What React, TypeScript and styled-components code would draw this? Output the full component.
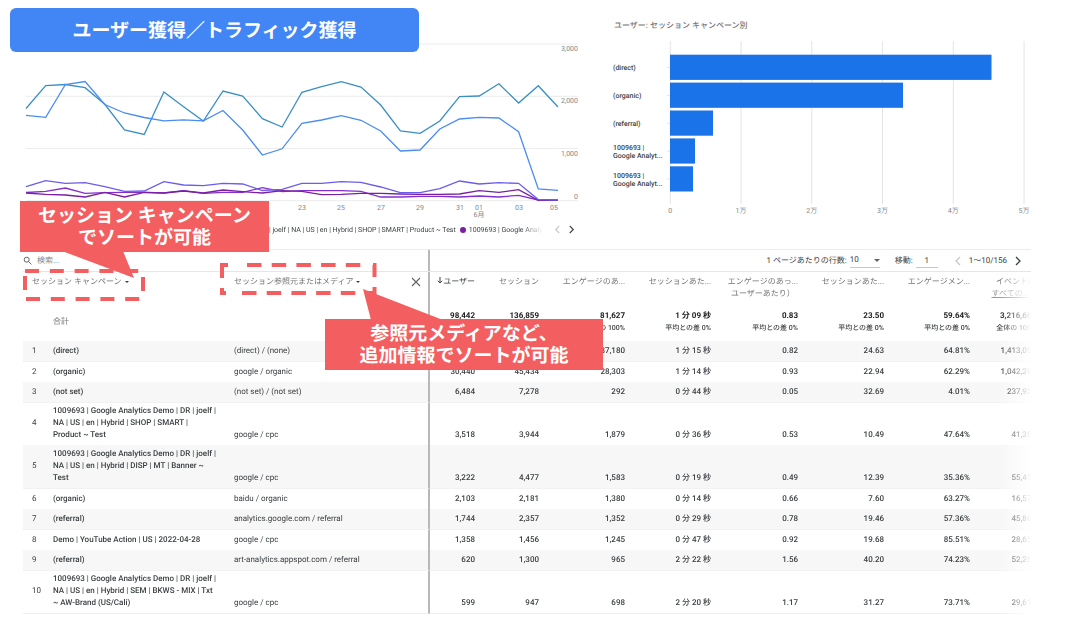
import React from "react";
import styled, { createGlobalStyle } from "styled-components";

const GlobalStyle = createGlobalStyle`
  *, *::before, *::after { box-sizing: border-box; }
  body {
    margin: 0;
    background: #fff;
    color: #3c4043;
    font-family: Roboto, "Noto Sans CJK JP", sans-serif;
    font-size: 8px;
    line-height: 12px;
    text-rendering: geometricPrecision;
  }
  button, input, select { font: inherit; color: inherit; text-rendering: inherit; }
`;

const Page = styled.main`
  position: relative;
`;

const Charts = styled.section`
  display: grid;
  grid-template-columns: 5fr 4fr;
`;

const ChartPanel = styled.div`
  min-width: 0;
`;

const Drawing = styled.svg`
  display: block;
  width: 100%;
  height: auto;
`;

const AxisText = styled.text`
  font-size: 7px;
  fill: #80868b;
`;

const BarLabel = styled.text`
  font-size: 7px;
  font-weight: 500;
  fill: #3c4043;
`;

const ChartTitle = styled.h2`
  margin: 0;
  padding: 20px 0 8px 14px;
  font-size: 8px;
  line-height: 12px;
  font-weight: 500;
  color: #757575;
`;

const Legend = styled.div`
  display: flex;
  align-items: center;
  height: 29px;
  padding: 0 24px 10px 269px;
`;

const LegendItems = styled.div`
  display: flex;
  flex: 1;
  gap: 4px;
  min-width: 0;
  overflow: hidden;
  white-space: nowrap;
  font-size: 7px;
  mask-image: linear-gradient(to right, #000 calc(100% - 22px), transparent);
`;

const LegendItem = styled.span<{ $color?: string }>`
  display: flex;
  align-items: center;
  gap: 3px;
  &::before {
    content: "";
    display: ${(p) => (p.$color ? "block" : "none")};
    width: 6px;
    height: 6px;
    border-radius: 50%;
    background: ${(p) => p.$color};
  }
`;

const IconButton = styled.button<{ $muted?: boolean }>`
  display: flex;
  padding: 0;
  border: 0;
  background: none;
  color: ${(p) => (p.$muted ? "#c4c7ca" : "#3c4043")};
`;

const LegendPager = styled.div`
  display: flex;
  gap: 5px;
  padding-left: 10px;
`;

const TablePanel = styled.section`
  margin: 0 49px 0 23px;
`;

const Toolbar = styled.div`
  display: flex;
  height: 23px;
  border-top: 1px solid #ececec;
  border-bottom: 1px solid #e6e6e6;
`;

const SearchLabel = styled.label`
  display: flex;
  align-items: center;
  gap: 5px;
  width: calc((100% + 5px) * 407 / 1013);
  border-right: 2px solid #b8b8b8;
  color: #5f6368;
`;

const SearchInput = styled.input`
  flex: 1;
  min-width: 0;
  padding: 0;
  border: 0;
  outline: 0;
  background: none;
  &::placeholder { color: #80868b; opacity: 1; }
`;

const Paging = styled.div`
  display: flex;
  flex: 1;
  align-items: center;
  justify-content: flex-end;
  padding-right: 8px;
`;

const PagingLabel = styled.label`
  display: flex;
  align-items: center;
  gap: 3px;
  margin-right: 15px;
`;

const SelectBox = styled.span`
  display: flex;
  align-items: center;
  width: 30px;
  height: 14px;
  border-bottom: 1px solid #c8c8c8;
`;

const RowsSelect = styled.select`
  flex: 1;
  min-width: 0;
  padding: 0;
  border: 0;
  background: none;
  appearance: none;
`;

const PageInput = styled.input`
  width: 22px;
  height: 14px;
  padding: 0;
  border: 0;
  border-bottom: 1px solid #c8c8c8;
  background: none;
  text-align: center;
`;

const Range = styled.span`
  margin: 0 6px;
`;

const TableClip = styled.div`
  overflow: hidden;
  mask-image: linear-gradient(to right, #000 calc(100% - 32px), transparent);
`;

const Table = styled.table`
  width: calc(100% + 5px);
  table-layout: fixed;
  border-spacing: 0;
`;

const HeadCell = styled.th<{ $divider?: boolean }>`
  height: 34px;
  padding: 4px 0 0;
  vertical-align: top;
  text-align: right;
  font-weight: 400;
  white-space: nowrap;
  color: #757575;
  border-right: ${(p) => (p.$divider ? "2px solid #b8b8b8" : "0")};
`;

const HeadFlex = styled.div<{ $left?: number }>`
  display: flex;
  align-items: center;
  justify-content: space-between;
  padding: 0 7px 0 ${(p) => p.$left ?? 0}px;
`;

const SortButton = styled.button<{ $active?: boolean; $underlined?: boolean }>`
  padding: 0;
  border: 0;
  background: none;
  white-space: nowrap;
  color: ${(p) => (p.$active ? "#3c4043" : p.$underlined ? "#9a9a9a" : "inherit")};
  text-decoration: ${(p) => (p.$underlined ? "underline" : "none")};
`;

const Caret = styled.span`
  display: inline-block;
  margin-left: 3px;
  border: 2px solid transparent;
  border-top-color: #3c4043;
  border-bottom: 0;
  vertical-align: middle;
`;

const TotalCell = styled.td<{ $divider?: boolean }>`
  height: 35px;
  padding: 4px 0 7px;
  vertical-align: top;
  text-align: right;
  white-space: nowrap;
  font-size: 7px;
  font-weight: 500;
  border-right: ${(p) => (p.$divider ? "2px solid #b8b8b8" : "0")};
`;

const TotalLabel = styled.td`
  padding: 10px 0 0;
  vertical-align: top;
  color: #757575;
`;

const TotalValue = styled.strong`
  display: block;
  font-size: 8px;
  font-weight: 700;
  color: #202124;
`;

const Row = styled.tr<{ $striped: boolean; $tall: boolean }>`
  td {
    padding: ${(p) => (p.$tall ? (p.$striped ? "3px" : "2px") : "4px")} 0 4px;
    background: ${(p) => (p.$striped ? "#f7f7f7" : "#fff")};
    border-bottom: ${(p) => (p.$striped ? "1px solid #f2f2f2" : "0")};
  }
  &:last-child td { border-bottom: 1px solid #efefef; }
`;

const IndexCell = styled.td`
  vertical-align: middle;
  && { padding-left: 9px; }
`;

const CampaignCell = styled.td`
  font-weight: 500;
  white-space: pre-line;
`;

const SourceCell = styled.td`
  vertical-align: bottom;
  white-space: nowrap;
  border-right: 2px solid #b8b8b8;
  && { padding-left: 1px; }
`;

const NumberCell = styled.td`
  vertical-align: bottom;
  text-align: right;
  font-weight: 500;
  white-space: nowrap;
`;

const Annotations = styled.svg`
  position: absolute;
  top: 0;
  left: 0;
  pointer-events: none;
`;

const Banner = styled.h1`
  position: absolute;
  top: 8px;
  left: 10px;
  width: 409px;
  margin: 0;
  padding-top: 1px;
  border-radius: 6px;
  background: #4285f4;
  color: #fff;
  font-size: 19px;
  line-height: 43px;
  font-weight: 700;
  text-align: center;
`;

const Callout = styled.p<{ $x: number; $y: number; $w: number }>`
  position: absolute;
  left: ${(p) => p.$x}px;
  top: ${(p) => p.$y}px;
  width: ${(p) => p.$w}px;
  margin: 0;
  padding: 4px 0 3px;
  background: #f35e60;
  color: #fff;
  font-size: 19px;
  line-height: 22px;
  font-weight: 700;
  text-align: center;
  white-space: pre-line;
`;

const series = [
  { color: "#8430ce", y: [192.5, 191.3, 188, 193.3, 192.7, 192.3, 192.3, 193, 190.7, 193.3, 192.3, 192.3, 187.7, 191.7, 190.7, 190.7, 190.7, 191.3, 197, 197, 196.3, 196.3, 197, 196, 197, 195.3, 200, 200] },
  { color: "#7b1fa2", y: [193, 194.3, 195, 197, 192.3, 197, 192.3, 193, 191, 193, 190, 191.7, 193, 190.7, 191.3, 194.7, 194.3, 193.3, 193.3, 194, 194.3, 194.3, 194, 190.7, 192.3, 189.7, 200.3, 200.3] },
  { color: "#6b5cf0", y: [186.7, 180.7, 183.3, 182.7, 186.7, 191.3, 191, 181.7, 185, 185.7, 183.3, 184, 190.5, 189.3, 183.3, 183.3, 181.7, 182.3, 187, 192.7, 192.7, 188.7, 181, 184, 182.7, 183.3, 199.5, 200] },
  { color: "#3a8fc4", y: [108.5, 85.7, 84.5, 87.7, 104.3, 130, 134.5, 92, 106.7, 121, 91, 96, 118.7, 127, 92.3, 86.7, 81.7, 87, 105, 131, 133.3, 121, 96.7, 96, 83.7, 103, 85.7, 107] },
  { color: "#4a8cf5", y: [115.3, 117.3, 84.5, 81.5, 104.5, 113, 117.5, 120.8, 119.8, 120.8, 110.5, 130, 155, 148.8, 123.3, 120, 115.7, 120.3, 131, 151, 150, 129, 119, 117.3, 118, 131.7, 189, 190.3] },
];

const toPoints = (ys: number[]) =>
  ys.map((y, i) => `${(26 + (i * 532) / 27).toFixed(1)},${y}`).join(" ");

const valueTicks = [
  { y: 44, label: "3,000", ty: 51 },
  { y: 96.3, label: "2,000", ty: 103 },
  { y: 148.5, label: "1,000", ty: 156 },
  { y: 200.7, label: "0", ty: 199 },
];

const dayTicks: [number, string][] = [
  [302, "23"], [341, "25"], [381, "27"], [420, "29"], [460, "31"], [479, "01"], [519, "03"], [554, "05"],
];

function LineChart() {
  return (
    <Drawing viewBox="0 0 600 220" role="img" aria-label="ユーザー推移">
      {valueTicks.map((t) => (
        <g key={t.label}>
          <line x1="26" x2="578" y1={t.y} y2={t.y} stroke="#ececec" />
          <AxisText x="578" y={t.ty} textAnchor="end">{t.label}</AxisText>
        </g>
      ))}
      {series.map((s) => (
        <polyline key={s.color} points={toPoints(s.y)} fill="none" stroke={s.color} strokeWidth="1.3" />
      ))}
      {dayTicks.map(([x, label]) => (
        <AxisText key={label} x={x} y="210" textAnchor="middle">{label}</AxisText>
      ))}
      <AxisText x="479" y="217" textAnchor="middle">6月</AxisText>
    </Drawing>
  );
}

const bars = [
  { lines: ["(direct)"], w: 321.5 },
  { lines: ["(organic)"], w: 233 },
  { lines: ["(referral)"], w: 43 },
  { lines: ["1009693 |", "Google Analyt..."], w: 25 },
  { lines: ["1009693 |", "Google Analyt..."], w: 23 },
];

function BarChart() {
  return (
    <Drawing viewBox="0 40 480 180" role="img" aria-label="キャンペーン別ユーザー">
      {["0", "1万", "2万", "3万", "4万", "5万"].map((label, i) => (
        <g key={label}>
          <line x1={70.3 + i * 70.75} x2={70.3 + i * 70.75} y1="41" y2="204" stroke="#e4e4e4" />
          <AxisText x={70.3 + i * 70.75} y="213" textAnchor="middle">{label}</AxisText>
        </g>
      ))}
      {bars.map((b, i) => (
        <g key={i}>
          <line x1="67" x2="70" y1={67.5 + i * 27.9} y2={67.5 + i * 27.9} stroke="#e4e4e4" />
          <rect x="70" y={54.7 + i * 27.9} width={b.w} height="25.2" fill="#1a73e8" />
          {b.lines.map((line, n) => (
            <BarLabel key={line} x="13" y={(b.lines.length > 1 ? 66 : 70) + i * 27.9 + n * 8.3}>{line}</BarLabel>
          ))}
        </g>
      ))}
    </Drawing>
  );
}

const Chevron = ({ dir, size = 10 }: { dir: "left" | "right"; size?: number }) => (
  <svg width={size} height={size} viewBox="0 0 10 10" fill="none" stroke="currentColor" strokeWidth="1.3">
    <path d={dir === "left" ? "M7 1 3 5l4 4" : "M3 1l4 4-4 4"} />
  </svg>
);

const columnWidths = [30, 180, 197, 45, 64, 86, 86, 87, 86, 86, 66];

const totals = [
  ["98,442", "全体の 100%"],
  ["136,859", "全体の 100%"],
  ["81,627", "全体の 100%"],
  ["1 分 09 秒", "平均との差 0%"],
  ["0.83", "平均との差 0%"],
  ["23.50", "平均との差 0%"],
  ["59.64%", "平均との差 0%"],
  ["3,216,666", "全体の 100%"],
];

const rows: [string, string, ...string[]][] = [
  ["(direct)", "(direct) / (none)", "59,103", "79,846", "37,180", "1 分 15 秒", "0.82", "24.63", "64.81%", "1,413,092"],
  ["(organic)", "google / organic", "30,440", "45,434", "28,303", "1 分 14 秒", "0.93", "22.94", "62.29%", "1,042,282"],
  ["(not set)", "(not set) / (not set)", "6,484", "7,278", "292", "0 分 44 秒", "0.05", "32.69", "4.01%", "237,924"],
  ["1009693 | Google Analytics Demo | DR | joelf |\nNA | US | en | Hybrid | SHOP | SMART |\nProduct ~ Test", "google / cpc", "3,518", "3,944", "1,879", "0 分 36 秒", "0.53", "10.49", "47.64%", "41,387"],
  ["1009693 | Google Analytics Demo | DR | joelf |\nNA | US | en | Hybrid | DISP | MT | Banner ~\nTest", "google / cpc", "3,222", "4,477", "1,583", "0 分 19 秒", "0.49", "12.39", "35.36%", "55,452"],
  ["(organic)", "baidu / organic", "2,103", "2,181", "1,380", "0 分 14 秒", "0.66", "7.60", "63.27%", "16,577"],
  ["(referral)", "analytics.google.com / referral", "1,744", "2,357", "1,352", "0 分 29 秒", "0.78", "19.46", "57.36%", "45,862"],
  ["Demo | YouTube Action | US | 2022-04-28", "google / cpc", "1,358", "1,456", "1,245", "0 分 47 秒", "0.92", "19.68", "85.51%", "28,658"],
  ["(referral)", "art-analytics.appspot.com / referral", "620", "1,300", "965", "2 分 22 秒", "1.56", "40.20", "74.23%", "52,264"],
  ["1009693 | Google Analytics Demo | DR | joelf |\nNA | US | en | Hybrid | SEM | BKWS - MIX | Txt\n~ AW-Brand (US/Cali)", "google / cpc", "599", "947", "698", "2 分 20 秒", "1.17", "31.27", "73.71%", "29,612"],
];

function ReportTable() {
  return (
    <TablePanel>
      <Toolbar>
        <SearchLabel>
          <svg width="9" height="9" viewBox="0 0 9 9" fill="none" stroke="currentColor" aria-hidden="true">
            <circle cx="3.7" cy="3.7" r="2.5" />
            <path d="m5.6 5.6 2.8 2.8" />
          </svg>
          <SearchInput placeholder="検索..." aria-label="検索" />
        </SearchLabel>
        <Paging>
          <PagingLabel>
            1 ページあたりの行数:
            <SelectBox>
              <RowsSelect defaultValue="10">
                <option>10</option>
                <option>25</option>
              </RowsSelect>
              <svg width="6" height="3" viewBox="0 0 6 3" aria-hidden="true"><path d="M0 0h6L3 3z" fill="#5f6368" /></svg>
            </SelectBox>
          </PagingLabel>
          <PagingLabel>
            移動:
            <PageInput defaultValue="1" />
          </PagingLabel>
          <IconButton $muted aria-label="前へ"><Chevron dir="left" /></IconButton>
          <Range>1〜10/156</Range>
          <IconButton aria-label="次へ"><Chevron dir="right" /></IconButton>
        </Paging>
      </Toolbar>
      <TableClip>
        <Table>
          <colgroup>
            {columnWidths.map((w, i) => <col key={i} width={w} />)}
          </colgroup>
          <thead>
            <tr>
              <HeadCell colSpan={2}>
                <HeadFlex $left={9}>
                  <SortButton>セッション キャンペーン<Caret /></SortButton>
                </HeadFlex>
              </HeadCell>
              <HeadCell $divider>
                <HeadFlex $left={1}>
                  <SortButton>セッション参照元またはメディア<Caret /></SortButton>
                  <IconButton aria-label="ディメンションを削除">
                    <svg width="10" height="10" viewBox="0 0 10 10" stroke="#5f6368" strokeWidth="1.1"><path d="m1 1 8 8M9 1 1 9" /></svg>
                  </IconButton>
                </HeadFlex>
              </HeadCell>
              <HeadCell>
                <SortButton $active>
                  <svg width="6" height="7" viewBox="0 0 6 7" fill="none" stroke="currentColor"><path d="M3 0v6M.8 3.8 3 6l2.2-2.2" /></svg>
                  ユーザー
                </SortButton>
              </HeadCell>
              <HeadCell><SortButton>セッション</SortButton></HeadCell>
              <HeadCell><SortButton>エンゲージのあ...</SortButton></HeadCell>
              <HeadCell><SortButton>セッションあた...</SortButton></HeadCell>
              <HeadCell><SortButton>エンゲージのあっ...<br />ユーザーあたり）</SortButton></HeadCell>
              <HeadCell><SortButton>セッションあた...</SortButton></HeadCell>
              <HeadCell><SortButton>エンゲージメン...</SortButton></HeadCell>
              <HeadCell>
                <SortButton>イベント数</SortButton><br />
                <SortButton $underlined>すべての...</SortButton><Caret />
              </HeadCell>
            </tr>
          </thead>
          <tbody>
            <tr>
              <td />
              <TotalLabel>合計</TotalLabel>
              <TotalCell $divider />
              {totals.map(([value, note], i) => (
                <TotalCell key={i}><TotalValue>{value}</TotalValue>{note}</TotalCell>
              ))}
            </tr>
            {rows.map(([campaign, source, ...values], i) => (
              <Row key={i} $striped={i % 2 === 0} $tall={campaign.includes("\n")}>
                <IndexCell>{i + 1}</IndexCell>
                <CampaignCell>{campaign}</CampaignCell>
                <SourceCell>{source}</SourceCell>
                {values.map((v, n) => <NumberCell key={n}>{v}</NumberCell>)}
              </Row>
            ))}
          </tbody>
        </Table>
      </TableClip>
    </TablePanel>
  );
}

export default function App() {
  return (
    <>
      <GlobalStyle />
      <Page>
        <Charts>
          <ChartPanel>
            <LineChart />
            <Legend>
              <LegendItems>
                <LegendItem>| joelf | NA | US | en | Hybrid | SHOP | SMART | Product ~ Test</LegendItem>
                <LegendItem $color="#7b1fa2">1009693 | Google Analytics</LegendItem>
              </LegendItems>
              <LegendPager>
                <IconButton $muted aria-label="前の凡例"><Chevron dir="left" size={9} /></IconButton>
                <IconButton aria-label="次の凡例"><Chevron dir="right" size={9} /></IconButton>
              </LegendPager>
            </Legend>
          </ChartPanel>
          <ChartPanel>
            <ChartTitle>ユーザー: セッション キャンペーン別</ChartTitle>
            <BarChart />
          </ChartPanel>
        </Charts>
        <ReportTable />
        <Annotations width="610" height="380" viewBox="0 0 610 380" aria-hidden="true">
          <g fill="none" stroke="#f35e60" strokeWidth="4">
            <path d="M25 271H143M26 299H144" strokeDasharray="14 10.8" />
            <path d="M25 276v14M143 277v14" />
            <path d="M247 265H362M242 293H357" strokeDasharray="14.5 10.2" />
            <path d="M228 265h-6v13M222 288v5h4M373 265h1.500v12M374.500 287v6h-9" />
          </g>
          <path d="M62 251h61l11 27zM371 320l-8-31 80 31z" fill="#f35e60" />
        </Annotations>
        <Banner>ユーザー獲得／トラフィック獲得</Banner>
        <Callout $x={20} $y={201} $w={249}>{"セッション キャンペーン\nでソートが可能"}</Callout>
        <Callout $x={325} $y={319} $w={278}>{"参照元メディアなど、\n追加情報でソートが可能"}</Callout>
      </Page>
    </>
  );
}
